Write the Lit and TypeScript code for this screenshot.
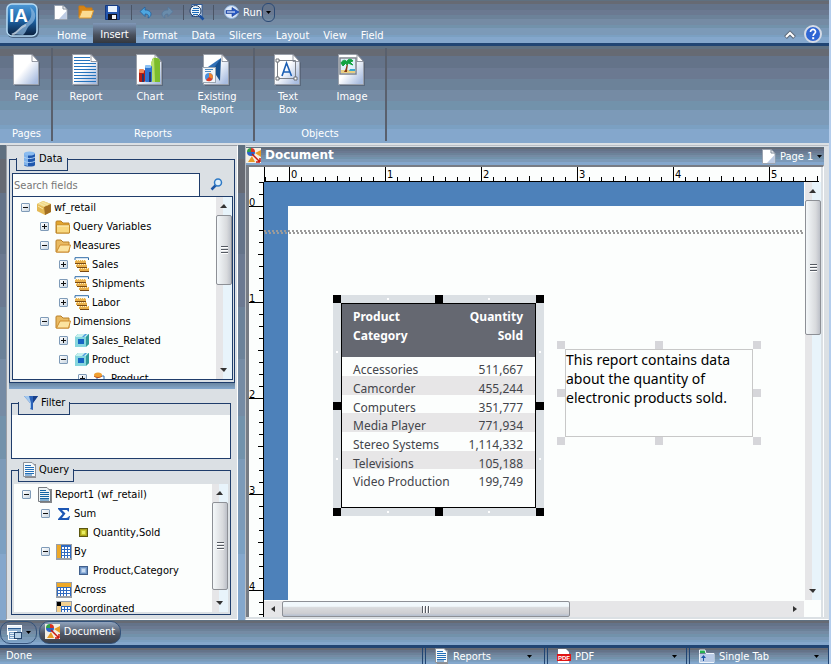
import { LitElement, html, css, svg, nothing, type TemplateResult } from "lit";
import { customElement, property } from "lit/decorators.js";
import { classMap } from "lit/directives/class-map.js";

type Art = TemplateResult;

/* ---------- icon artwork ---------- */

const icon = (w: number, h: number, body: unknown, vb = `0 0 ${w} ${h}`): Art =>
  html`<svg class="ico" width=${w} height=${h} viewBox=${vb} aria-hidden="true">${body}</svg>`;

const sheet = (extra: unknown = nothing): Art =>
  icon(28, 32, svg`
    <defs><linearGradient id="sh" x1="0" y1="0" x2="1" y2="1">
      <stop offset="0.45" stop-color="#fff"/><stop offset="0.9" stop-color="#a9bde0"/></linearGradient></defs>
    <path d="M2 2H20L27 9V32H2Z" fill="#4d586b" opacity=".6"/>
    <path d="M.5 .5H19L25.500 7.500V30.500H.5Z" fill="url(#sh)" stroke="#9aa0aa"/>
    <path d="M19 .5L25.500 7.500H19Z" fill="#fff" stroke="#6a707c" stroke-width=".7"/>
    ${extra}`);

const textLines = svg`<path d="M2 3.500H18M2 6.500H18M2 9.500H24M2 12.500H24M2 15.500H24M2 18.500H24M2 21.500H24M2 24.500H24M2 27.500H24" stroke="#2473bd"/>`;

const chartArt = svg`
  <path d="M16 6C16 3 24 3 24 7V28H16Z" fill="#7cbd2c"/><path d="M15 8L18 3L19 28H15Z" fill="#b7de6d"/>
  <rect x="9" y="12" width="7" height="16" rx="1" fill="#2f74cf"/><rect x="9" y="11" width="6" height="3" rx="1" fill="#8bc1f4"/>
  <rect x="3" y="16" width="6" height="12" rx="1" fill="#b51d12"/><rect x="3" y="15" width="5" height="4" rx="1" fill="#f08a58"/>
  <path d="M7 20V28M14 18V28" stroke="#26356a" stroke-width="2"/>`;

const existingArt = svg`
  <path d="M18 4L17 27L11 18L6 24L4 19Z" fill="#17508f"/><path d="M18 4L2 15L8 18Z" fill="#2f6fb6"/>
  <rect x="-.5" y="13.500" width="13" height="15" fill="#f2f5f8" stroke="#9aa7b4"/>
  <path d="M2 15.500H10M2 17.500H8" stroke="#4c8cc4"/>
  <circle cx="6" cy="23" r="4" fill="#4a90dd"/><path d="M6 23V19A4 4 0 0 1 9.500 25Z" fill="#f0812a"/><path d="M6 23L9.500 25A4 4 0 0 1 3 26Z" fill="#de3a22"/>`;

const textBoxArt = svg`
  <path d="M3.500 6.500H21.500V24.500H3.500Z" fill="none" stroke="#7d8188"/>
  <path d="M2 5h3v3h-3zM20 23h3v3h-3zM2 23h3v3h-3z" fill="#fff" stroke="#6c7077"/>
  <path d="M8 22L12.500 9L17.500 22M9.500 18H16" fill="none" stroke="#1b5fb4" stroke-width="1.600"/>`;

const imageArt = svg`
  <rect x="2" y="4" width="16" height="16" fill="#fff" stroke="#7e848d" stroke-width="1.500"/>
  <rect x="3" y="5" width="14" height="11" fill="#dff0fa"/><rect x="3" y="16" width="14" height="3" fill="#e8cf83"/>
  <path d="M12 15H17V17H11Z" fill="#3aa7cf"/>
  <path d="M9 9C8 13 8 15 6 18H9C9 15 10 12 10 9Z" fill="#8a3b12"/>
  <path d="M3 9C5 5 8 6 9 8C9 5 13 4 15 7L12 8L15 11L10 9L9 11L8 9L5 12Z" fill="#12a340" stroke="#12a340"/>`;

const newDoc = icon(14, 15, svg`<path d="M.5.5H9L13 4V14.500H.5Z" fill="#fff" stroke="#9aa3b0"/><path d="M12.500 6V14H5Z" fill="#bccbe4"/><path d="M9 .5V4H13" fill="none" stroke="#7d8796"/>`);
const openFolder = icon(16, 14, svg`<path d="M1 12V1H6L8 3H14V6" fill="#d68415" stroke="#c77a17"/><path d="M1 13L4 5.500H15.500L13 13Z" fill="#fbdc92" stroke="#e29a2d"/>`);
const save = icon(15, 15, svg`<path d="M.5.5H13L14.500 2V14.500H.5Z" fill="#2456ae" stroke="#163a80"/><rect x="3" y="1" width="9" height="6" fill="#e9f3fd"/><rect x="3" y="9" width="9" height="6" fill="#10131f"/><rect x="7" y="10" width="4" height="4" fill="#eef1f5"/>`);
const undo = icon(13, 13, svg`<path d="M1 5.500L6 1V4C10 4 12 6 12 8C12 10 11 11 9 12C10 9 9 8 6 8V10.500Z" fill="#4ea6df" stroke="#235f9c" stroke-width=".8"/>`);
const redo = icon(13, 13, svg`<path d="M12 5.500L7 1V4C3 4 1 6 1 8C1 10 2 11 4 12C3 9 4 8 7 8V10.500Z" fill="#6a8cab" stroke="#55779a" stroke-width=".8"/>`);
const preview = icon(16, 17, svg`<rect x="3" y=".5" width="10" height="12" fill="#fff" stroke="#2f5c9a"/><circle cx="6.500" cy="7" r="5.500" fill="#eaf4fc" stroke="#1d3861"/><path d="M4 4.500H10M3 6.500H10M3 8.500H10M4 10.500H9" stroke="#1c6ab6"/><path d="M10.500 11.500L14.500 15.500" stroke="#1a4fa0" stroke-width="2.500"/>`);
const runIcon = icon(16, 14, svg`<ellipse cx="7.500" cy="7" rx="7" ry="6.500" fill="#dbe8f8" stroke="#8eb0da"/><path d="M2 5.500H8V2.500L15 7L8 11.500V8.500H2Z" fill="#2859c4" stroke="#173a92" stroke-width=".6"/><path d="M3 7H11" stroke="#fff"/>`);
const caret = html`<svg class="caret" width="5" height="3" viewBox="0 0 5 3" aria-hidden="true"><path d="M0 0H5L2.500 3Z" fill="currentColor"/></svg>`;

const logo = icon(34, 36, svg`
  <defs><linearGradient id="lg" x1="0" y1="0" x2="0" y2="1"><stop offset="0" stop-color="#4e9ad8"/><stop offset=".5" stop-color="#1d64a6"/><stop offset="1" stop-color="#0b1f3c"/></linearGradient></defs>
  <rect x="1" y="2" width="32" height="33" rx="6" fill="#20344e" opacity=".6"/>
  <rect x="1" y="1" width="30" height="32" rx="5" fill="url(#lg)" stroke="#b7dcf6" stroke-width="1.500"/>
  <path d="M5 31C14 28 12 24 19 21C25 17 27 12 24 4C31 9 31 17 24 22C20 25 21 29 17 32Z" fill="#8fb9df" opacity=".7"/>
  <path d="M6 32C14 28 12 25 20 22" stroke="#d8dde2" stroke-width="2" fill="none" opacity=".6"/>
  <text x="3" y="19" class="logo-text">IA</text>`);

const help = icon(18, 18, svg`<circle cx="9" cy="9" r="8" fill="#2f66d4" stroke="#d5dbe6" stroke-width="2"/><path d="M6.500 7C6.500 3.500 11.700 3.700 11.500 7C11.400 8.700 9.200 8.600 9.200 11" fill="none" stroke="#fff" stroke-width="1.700"/><rect x="8.200" y="12.200" width="2" height="2" fill="#fff"/>`);
const collapse = icon(12, 9, svg`<path d="M1.500 7.500L6 3L10.500 7.500" fill="none" stroke="#5d6878" stroke-width="4"/><path d="M2 7L6 3L10 7" fill="none" stroke="#fff" stroke-width="2"/>`);

const database = icon(16, 16, svg`<path d="M3 2H14V14C14 16 3 16 3 14Z" fill="#1f57ad"/><path d="M3 2H7V15L3 14Z" fill="#7fb2ea"/><ellipse cx="8.500" cy="2.500" rx="5.500" ry="2" fill="#8bbcf0"/><path d="M3 6C5 8 12 8 14 6M3 10C5 12 12 12 14 10" stroke="#aed0f5" fill="none"/>`);
const funnel = icon(16, 16, svg`<path d="M1 1H15L10 8V15L7 14V8Z" fill="#2b62b8"/><path d="M1 1H6L8 8V14L7 13V8Z" fill="#a3c8ee"/><path d="M10 1H15L10 8Z" fill="#173f8a"/>`);
const lineDoc = icon(14, 16, svg`<path d="M2 2H13V16H2Z" fill="#8c8c90"/><path d="M.5.5H9L12.500 4V14.500H.5Z" fill="#f6fafc" stroke="#8c9198"/><path d="M2 3.500H8M2 5.500H11M2 7.500H11M2 9.500H11M2 11.500H11M2 13H9" stroke="#236fb8"/>`);
const magnifier = icon(13, 13, svg`<path d="M6 7L1.500 11.500" stroke="#1d57a5" stroke-width="2.500"/><circle cx="8" cy="4.500" r="3.500" fill="#dff0fb" stroke="#2f7ac6" stroke-width="1.500"/>`);

const treeArt: Record<string, Art> = {
  cube: icon(16, 16, svg`<path d="M1 4L7 1L15 4V12L9 15L1 11Z" fill="#e4b955"/><path d="M1 4L7 1L15 4L8 7Z" fill="#efd88a"/><path d="M8 7L15 4V12L9 15Z" fill="#a36f22"/><path d="M3 3L9 6M6 2L12 5M2 6L7 9" stroke="#fae9a7"/>`),
  closed: icon(16, 14, svg`<path d="M1 13V2Q1 1 2 1H6L8 3H14V13Z" fill="#e3a62f" stroke="#b98028"/><path d="M1.500 5H14.500V13H1.500Z" fill="#f8d87f" stroke="#c38b2b"/><path d="M2 6H14" stroke="#fff0bd"/>`),
  open: icon(16, 14, svg`<path d="M1 13V2Q1 1 2 1H6L8 3H14V13Z" fill="#e9ba62" stroke="#b98028"/><path d="M1.500 13L5 6H15.500L13.500 13Z" fill="#fbe3a0" stroke="#cf8c2e"/>`),
  measure: icon(16, 15, svg`<path d="M1 3V.7H14.500V3" fill="none" stroke="#2e6ca8"/><path d="M1 3H12V6H1ZM2 7H13V10H2ZM5 11H15V14H5Z" fill="#e8b04c"/><path d="M1 6.500H12M3 10.500H13M6 14.500H15" stroke="#7a4a12"/><path d="M1 3.500H12M2 7.500H13M5 11.500H15" stroke="#fff0c0" stroke-dasharray="1 1"/>`),
  dimension: icon(16, 15, svg`<path d="M1 4L4 1H15V11L11 14H1Z" fill="#3fa9ad"/><path d="M1 4L4 1H15L12 4Z" fill="#c5f0ee"/><rect x="1" y="4" width="11" height="10" fill="#85d6dd"/><rect x="4" y="6" width="6" height="5" fill="#1765c4"/><path d="M12 4L15 1V11L12 14Z" fill="#319b9c"/><path d="M8 4L11 1H13L10 4Z" fill="#4f9be0"/>`),
  hierarchy: icon(16, 14, svg`<path d="M5 4H11V9M4 5V11" stroke="#2b6fb2" fill="none"/><g fill="#f0a030"><ellipse cx="5" cy="3" rx="4" ry="2.500"/><ellipse cx="5" cy="10" rx="3" ry="2.500"/><ellipse cx="12" cy="10" rx="3" ry="2.500"/></g><path d="M1 4C3 6 7 6 9 4" stroke="#c0501a" fill="none"/>`),
  report: icon(16, 16, svg`<path d="M3 2H15V16H3Z" fill="#85878a"/><path d="M1.500.5H10L13.500 4V14.500H1.500Z" fill="#eef4f6" stroke="#777b80"/><path d="M3 3.500H9M3 5.500H12M3 7.500H12M3 9.500H12M3 11.500H12M3 13H12" stroke="#1464a4"/>`),
  sigma: icon(14, 14, svg`<path d="M1 1H12V4.500H11C10.500 3 10 3 5 3L8.500 6.500L5 11C10 11 11 11 12 9H13L12 13H1V12L5.500 7L1 2Z" fill="#1c57b4"/>`),
  by: icon(16, 16, svg`<rect width="16" height="16" fill="#9aa0a8"/><rect x="1" y="1" width="14" height="13" fill="#2f6ac0"/><rect x="1" y="1" width="4" height="13" fill="#eda827"/><path d="M2 3.500H5M2 7.500H5M2 11.500H5M6 3H8V5H6ZM9 3H11V5H9ZM12 3H14V5H12ZM6 6H8V8H6ZM9 6H11V8H9ZM12 6H14V8H12ZM6 9H8V11H6ZM9 9H11V11H9ZM12 9H14V11H12ZM6 12H8V14H6ZM9 12H11V14H9ZM12 12H14V14H12Z" fill="#fff"/>`),
  across: icon(16, 16, svg`<rect width="16" height="16" fill="#9aa0a8"/><rect x="1" y="1" width="14" height="13" fill="#2f6ac0"/><rect x="1" y="1" width="14" height="4" fill="#eda827"/><path d="M2 6H4V8H2ZM5 6H7V8H5ZM8 6H10V8H8ZM11 6H14V8H11ZM2 9H4V11H2ZM5 9H7V11H5ZM8 9H10V11H8ZM11 9H14V11H11ZM2 12H4V14H2ZM5 12H7V14H5ZM8 12H10V14H8ZM11 12H14V14H11Z" fill="#fff"/>`),
  coordinated: icon(16, 16, svg`<rect width="16" height="16" fill="#9aa0a8"/><rect x="1" y="1" width="14" height="13" fill="#2f6ac0"/><path d="M5 1H15V5H5ZM1 5H5V14H1Z" fill="#f6d28f"/><path d="M6 6H8V8H6ZM9 6H11V8H9ZM12 6H14V8H12ZM6 9H8V11H6ZM9 9H11V11H9ZM12 9H14V11H12ZM6 12H8V14H6ZM9 12H11V14H9ZM12 12H14V14H12Z" fill="#fff"/><rect x="1" y="1" width="4" height="4" fill="#000"/>`),
  yellow: icon(9, 9, svg`<rect x=".5" y=".5" width="8" height="8" fill="#a9a11c" stroke="#5b5710"/><path d="M2.500 6.500V2.500H6.500V6.500Z" fill="#e9ec64" stroke="#c9c930"/>`),
  blue: icon(9, 9, svg`<rect x=".5" y=".5" width="8" height="8" fill="#6d93c4" stroke="#41608c"/><path d="M2.500 6.500V2.500H6.500V6.500Z" fill="#c9dcf2" stroke="#9dbbe0"/>`),
};

const docIcon = icon(16, 16, svg`<rect width="15" height="15" fill="#f3efe4"/><path d="M1 4A4 4 0 0 1 5 0L5 4Z" fill="#2fa04a"/><path d="M5 0A4 4 0 0 1 9 4H5Z" fill="#d9321f"/><path d="M1 4H9A4 4 0 0 1 1 4Z" fill="#2a62c9"/><path d="M15 2V9L9 5ZM2 14L6 8L9 14Z" fill="#e89a25"/><path d="M6 6L14 14M14 14V10M14 14H10" stroke="#c8190f" stroke-width="1.500" fill="none"/>`);
const windows = icon(16, 16, svg`<rect x=".5" y=".5" width="14" height="9" fill="#8fb0d0" stroke="#fff"/><path d="M1 2H14" stroke="#e8f0f8" stroke-width="2"/><path d="M1 3.500H14" stroke="#2c5c92"/><rect x="1.500" y="6.500" width="8" height="8" fill="#7ba2c8" stroke="#fff"/><path d="M3 8.500H8M3 10.500H8M3 12.500H8" stroke="#e8f0f8"/><rect x="7.500" y="7.500" width="7" height="6" fill="#b7d0e6" stroke="#24456c"/>`);
const pdfIcon = icon(14, 14, svg`<path d="M1 0H9L12 3V14H1Z" fill="#fff"/><rect y="5" width="14" height="7" fill="#e01414"/><text x="1" y="11" class="pdf-text">PDF</text>`);
const tabIcon = icon(16, 14, svg`<path d="M1 1H6V4H1Z" fill="#22b04c"/><path d="M.5 4.500V1H6L7 4.500H15V13.500H.5Z" fill="none" stroke="#eef4fb"/><rect x="1" y="5" width="14" height="8" fill="#b9cbe6"/><path d="M4 12V9H2L4.500 6L7 9H5V12Z" fill="#1e57a8"/>`);

/* ---------- shared styles ---------- */

const base = css`
  * { box-sizing: border-box; }
  button, input, select { font: inherit; color: inherit; margin: 0; padding: 0; border: 0; background: none; border-radius: 0; }
  .ico, .caret { display: block; flex: none; overflow: visible; }
`;

const bands = css`linear-gradient(
  #5f7080 0 3%, #666a73 3% 10%, #647389 10% 23%, #6b7991 23% 34%, #6c8299 34% 45%,
  #758ba4 45% 57%, #7292ab 57% 66%, #7c9ab8 66% 81%, #7ba0c2 81% 86%, #84a7cc 86% 100%)`;

/* ---------- scroll bar ---------- */

@customElement("scroll-bar")
export class ScrollBar extends LitElement {
  @property({ type: Boolean, reflect: true }) horizontal = false;
  @property({ type: Number }) before = 0;
  @property({ type: Number }) size = 50;

  static styles = css`
    :host { display: flex; flex-direction: column; width: 16px; flex: none; background: linear-gradient(90deg, #e6e6e8 7px, #e8f4fb 7px); }
    :host([horizontal]) { flex-direction: row; width: auto; height: 16px; background: #e6e6e8; }
    .end { flex: 0 0 18px; display: grid; place-items: center; color: #333; }
    .lane { flex: 1; display: flex; flex-direction: inherit; min-height: 0; min-width: 0; }
    .thumb { border: 1px solid #8d9096; border-radius: 2px; background: linear-gradient(90deg, #f4f8fa, #d8dadd 70%, #bcc0c8); display: grid; place-content: center; }
    :host([horizontal]) .thumb { background: linear-gradient(#f1f8fc 30%, #d8dadd 40%, #cfcfd2 80%, #b4bfd0); }
    .grip { width: 7px; height: 8px; background: repeating-linear-gradient(#555a62 0 1px, #fff 1px 2px, transparent 2px 3px); }
    :host([horizontal]) .grip { width: 8px; height: 7px; background: repeating-linear-gradient(90deg, #555a62 0 1px, #fff 1px 2px, transparent 2px 3px); }
  `;

  private arrow(first: boolean) {
    const d = this.horizontal ? (first ? "M6 1V7L2 4Z" : "M2 1V7L6 4Z") : (first ? "M0 6H7L4 2Z" : "M0 2H7L4 6Z");
    return html`<div class="end"><svg width="8" height="8" viewBox="0 0 8 8"><path d=${d} fill="currentColor" /></svg></div>`;
  }

  render() {
    return html`${this.arrow(true)}
      <div class="lane">
        <div style="flex: ${this.before} 1 0"></div>
        <div class="thumb" style="flex: ${this.size} 1 0"><div class="grip"></div></div>
        <div style="flex: ${100 - this.before - this.size} 1 0"></div>
      </div>
      ${this.arrow(false)}`;
  }
}

/* ---------- tree ---------- */

interface Node { level: number; text: string; art: string; mark?: "+" | "-"; }

@customElement("field-tree")
export class FieldTree extends LitElement {
  @property({ attribute: false }) nodes: Node[] = [];

  static styles = [base, css`
    :host { display: block; flex: 1; min-width: 0; overflow: hidden; }
    ul { list-style: none; margin: 0; padding: 1px 0 0 8px; }
    li { display: flex; align-items: center; height: 19px; white-space: nowrap; }
    .l1 { padding-left: 19px; }
    .l2 { padding-left: 38px; }
    .l3 { padding-left: 57px; }
    .mark { width: 9px; height: 9px; margin-right: 6px; flex: none; }
    .box { border: 1px solid #7f9bb8; border-radius: 1px; background: linear-gradient(135deg, #fff, #c9d6e2); }
    .box svg { display: block; }
    .art { width: 16px; margin-right: 2px; display: grid; place-items: center; flex: none; }
  `];

  render() {
    return html`<ul role="tree">
      ${this.nodes.map((n) => html`<li role="treeitem" class="l${n.level}">
        ${n.mark
          ? html`<button class="mark box" aria-label="Toggle ${n.text}"><svg width="7" height="7" viewBox="0 0 7 7">
              <path d=${n.mark === "+" ? "M1 3.500H6M3.500 1V6" : "M1 3.500H6"} stroke="#111" /></svg></button>`
          : html`<span class="mark"></span>`}
        <span class="art">${treeArt[n.art]}</span>${n.text}
      </li>`)}
    </ul>`;
  }
}

/* ---------- application ---------- */

const menu = ["Home", "Insert", "Format", "Data", "Slicers", "Layout", "View", "Field"];

const ribbon = [
  { name: "Pages", cls: "pages", items: [{ text: "Page", art: sheet() }] },
  { name: "Reports", cls: "reports", items: [
    { text: "Report", art: sheet(textLines) },
    { text: "Chart", art: sheet(chartArt) },
    { text: "Existing Report", art: sheet(existingArt) },
  ] },
  { name: "Objects", cls: "objects", items: [
    { text: "Text Box", art: sheet(textBoxArt) },
    { text: "Image", art: sheet(imageArt) },
  ] },
];

const dataNodes: Node[] = [
  { level: 0, text: "wf_retail", art: "cube", mark: "-" },
  { level: 1, text: "Query Variables", art: "closed", mark: "+" },
  { level: 1, text: "Measures", art: "open", mark: "-" },
  { level: 2, text: "Sales", art: "measure", mark: "+" },
  { level: 2, text: "Shipments", art: "measure", mark: "+" },
  { level: 2, text: "Labor", art: "measure", mark: "+" },
  { level: 1, text: "Dimensions", art: "open", mark: "-" },
  { level: 2, text: "Sales_Related", art: "dimension", mark: "+" },
  { level: 2, text: "Product", art: "dimension", mark: "-" },
  { level: 3, text: "Product", art: "hierarchy", mark: "+" },
];

const queryNodes: Node[] = [
  { level: 0, text: "Report1 (wf_retail)", art: "report", mark: "-" },
  { level: 1, text: "Sum", art: "sigma", mark: "-" },
  { level: 2, text: "Quantity,Sold", art: "yellow" },
  { level: 1, text: "By", art: "by", mark: "-" },
  { level: 2, text: "Product,Category", art: "blue" },
  { level: 1, text: "Across", art: "across" },
  { level: 1, text: "Coordinated", art: "coordinated" },
];

const sales = [
  ["Accessories", "511,667"],
  ["Camcorder", "455,244"],
  ["Computers", "351,777"],
  ["Media Player", "771,934"],
  ["Stereo Systems", "1,114,332"],
  ["Televisions", "105,188"],
  ["Video Production", "199,749"],
];

@customElement("app-root")
export class AppRoot extends LitElement {
  static styles = [base, css`
    :host {
      display: flex; flex-direction: column; height: 100vh; padding-right: 2px; overflow: hidden;
      background: #b4cdec; color: #000;
      font: 11px/13px "DejaVu Sans Condensed", "DejaVu Sans", "Liberation Sans", sans-serif;
      --navy: #1f3d6b; --panel: #dbe0e4; --paper: #fcfefd;
    }
    .logo-text { font: bold 19px "Liberation Sans", sans-serif; fill: #fff; }
    .pdf-text { font: bold 6px "Liberation Sans", sans-serif; fill: #fff; }

    /* title area */
    .top { display: flex; height: 46px; color: #fff; background: ${bands}; border-bottom: 3px solid #214573; }
    .logo { width: 50px; padding: 3px 0 0 6px; }
    .bars { flex: 1; display: flex; flex-direction: column; }
    .quick { display: flex; align-items: center; height: 24px; }
    .quick button { display: flex; align-items: center; justify-content: center; gap: 3px; width: 27px; height: 24px; }
    .quick .tight { width: 22px; }
    .quick .run { width: 38px; margin-left: 8px; }
    .quick .drop { width: 13px; height: 19px; border: 1px solid #2b4a75; border-radius: 6px; color: #000; }
    .sep { width: 1px; height: 15px; margin: 0 2px 0 5px; background: #4b5566; }
    .menu { display: flex; height: 19px; align-items: stretch; }
    .menu button { padding: 3px 7px 0; }
    .menu .on { background: linear-gradient(#7f97b8, #4a515e 60%, #33383f); margin: -1px 0 0; padding: 2px 7px 0; }
    .corner { display: flex; align-items: flex-end; gap: 8px; padding: 0 7px 0 0; }
    .corner button { display: grid; place-items: center; height: 18px; }

    /* ribbon */
    .ribbon { display: flex; height: 99px; padding: 2px 0; color: #fff; background: ${bands}; background-size: 100% 97px; background-repeat: no-repeat; background-color: var(--panel); }
    .group { display: flex; flex-direction: column; align-items: center; border-right: 2px solid #59606d; height: 93px; }
    .group h2 { margin: auto 0 1px; font: inherit; line-height: 13px; }
    .tools { display: flex; padding-top: 6px; }
    .tools button { width: 64px; display: flex; flex-direction: column; align-items: center; gap: 4px; align-self: flex-start; }
    .tools span { width: 56px; }
    .pages { width: 53px; padding-left: 2px; }
    .pages .tools button, .pages .tools span { width: 51px; }
    .reports { width: 202px; }
    .reports button:last-child { width: 70px; }
    .objects { width: 132px; }
    .objects .tools span { width: 40px; }

    /* body */
    .main { flex: 1; display: flex; min-height: 0; padding-left: 6px; gap: 7px; background: ${bands}; }
    .side { width: 232px; flex: none; display: flex; flex-direction: column; padding: 13px 3px 4px 2px; background: var(--panel); border: 1px solid #9a9fa6; border-right-color: #fff; border-bottom-color: #fff; }
    .box { border: 1px solid var(--navy); display: flex; flex-direction: column; min-height: 0; }
    .box > h3 { align-self: flex-start; display: flex; align-items: center; gap: 2px; height: 22px; margin: -11px 0 0 6px; padding: 0 5px 2px; font: inherit; flex: none; border-bottom: 1px solid var(--navy);
      background: linear-gradient(90deg, var(--navy) 1px, transparent 1px calc(100% - 1px), var(--navy) calc(100% - 1px)) 0 100% / 100% 12px no-repeat, var(--panel); }
    .data { flex: 1; margin-right: -1px; }
    .find { display: flex; margin: 2px 1px 0 2px; flex: none; }
    .find input { width: 188px; height: 23px; padding: 0 1px; background: var(--paper); border: 1px solid var(--navy); border-bottom: 0; }
    .find input::placeholder { color: #777; opacity: 1; }
    .find button { flex: 1; display: grid; place-items: center; }
    .tree { display: flex; flex: 1; min-height: 0; margin: 0 1px 2px 2px; background: var(--paper); border: 1px solid var(--navy); }
    .strip { height: 6px; margin-right: -1px; flex: none; background: linear-gradient(#6b86a0, #84a7cc); }
    .filter { height: 56px; margin: 14px 3px 0 2px; flex: none; }
    .filter .blank { flex: 1; background: var(--paper); }
    .query { height: 145px; margin: 11px 3px 0 2px; flex: none; }
    .query .tree { border: 0; margin: 2px; }

    .doc { flex: 1; min-width: 0; display: flex; flex-direction: column; padding: 0 4px 2px 0; background: var(--panel); border: 1px solid #b9bec4; border-bottom-color: #fff; border-right-color: var(--panel); }
    .bar { display: flex; align-items: center; gap: 3px; height: 18px; flex: none; margin-top: 1px; color: #fff; background: ${bands}; }
    .bar h1 { flex: 1; margin: 0; font: bold 12px/14px "DejaVu Sans", sans-serif; padding-bottom: 2px; }
    .pick { display: flex; align-items: center; gap: 4px; }
    .pick select { appearance: none; width: 100%; min-width: 0; }
    .pick .caret { color: #000; }
    .bar .pick { width: 60px; margin-right: 2px; }
    .bar .pick select { width: 34px; }
    .work { flex: 1; min-height: 0; display: grid; grid-template: 15px minmax(0, 1fr) 17px / 15px minmax(0, 1fr) 17px; padding-right: 2px; background: linear-gradient(var(--panel), var(--panel)) 100% 0 / 2px 100% no-repeat, var(--paper); border: solid #777c84; border-width: 2px 0 0 3px; border-right: 1px solid #fff; }
    .hr { grid-column: 2 / 4; display: flex; overflow: hidden; margin-right: 2px; padding-left: 24px; border-bottom: 1px solid #000; border-left: 1px solid #000;
      background: linear-gradient(90deg, #000 1px, transparent 1px) 72px 100% / 96px 5px repeat-x, linear-gradient(90deg, #000 1px, transparent 1px) 0 100% / 12px 4px repeat-x; }
    .hr span { flex: 0 0 96px; height: 14px; padding: 1px 0 0 1px; border-left: 1px solid #000; }
    .vr { grid-row: 2 / 4; overflow: hidden; padding-top: 24px; border-right: 1px solid #000;
      background: linear-gradient(#000 1px, transparent 1px) 100% 0 / 4px 12px repeat-y, linear-gradient(#000 1px, transparent 1px) 100% 72px / 5px 96px repeat-y; }
    .vr span { display: block; height: 96px; margin: -10px 0 10px; }
    .vr span::after { content: ""; display: block; border-top: 1px solid #000; margin-top: -3px; }
    .canvas { position: relative; overflow: hidden; padding: 24px 0 0 24px; background: #4d81ba; }
    .page { height: 100%; background: var(--paper); }
    .guide { position: absolute; left: 0; right: 0; top: 48px; height: 4px;
      background: linear-gradient(90deg, #9b9b9b 2px, transparent 2px) 0 0 / 4px 2px repeat-x, linear-gradient(90deg, #9b9b9b 2px, transparent 2px) 1px 2px / 4px 2px repeat-x; }
    .work > scroll-bar { margin: 0 0 0 1px; }
    .work > scroll-bar[horizontal] { margin: 1px 0 0; }

    /* selectable objects */
    .object { position: absolute; padding: 8px; font-family: "Noto Sans", "DejaVu Sans", sans-serif; }
    .handles { position: absolute; inset: 0; display: grid; grid-template-columns: repeat(3, 8px); justify-content: space-between; align-content: space-between; pointer-events: none; }
    .handles i { height: 8px; background: #d6d6da; }
    .active .handles i { background: #000; }
    .handles i:nth-child(5) { visibility: hidden; }
    .report { left: 69px; top: 113px; width: 211px; height: 221px; --dot: linear-gradient(#fff, #fff);
      background: var(--dot) 54px 3px, var(--dot) 155px 3px, var(--dot) 54px 216px, var(--dot) 155px 216px,
        var(--dot) 3px 56px, var(--dot) 3px 163px, var(--dot) 206px 56px, var(--dot) 206px 163px;
      background-size: 2px 2px; background-repeat: no-repeat; background-color: var(--panel); }
    .frame { height: 100%; border: 1px solid #000; background: var(--paper); }
    .report table { width: 100%; border-collapse: separate; border-spacing: 0; font-size: 12px; line-height: 19px; color: #43454b; }
    .report thead { background: #656871; color: #fff; }
    .report th { height: 53px; padding: 3px 0 0 11px; vertical-align: top; text-align: left; }
    .report td { height: 19px; padding: 0 0 0 11px; white-space: nowrap; }
    .report td div { height: 16px; margin-top: 3px; line-height: 19px; }
    .report tr:nth-child(3n) td { height: 18px; }
    .report tr:nth-child(3n) td div { height: 15px; }
    .report tbody tr:nth-child(even) { background: #e7e6e7; }
    .report th:last-child, .report td:last-child { padding-left: 0; padding-right: 12px; text-align: right; }
    .note { left: 293px; top: 159px; width: 204px; height: 104px; }
    .note p { height: 100%; margin: 0; border: 1px solid #c8c8c8; font-size: 14px; line-height: 19px; }

    /* bottom bars */
    .tabs { display: flex; gap: 2px; height: 28px; flex: none; padding-top: 1px; background: ${bands}; border-bottom: 3px solid #214573; color: #fff; }
    .tabs button { height: 23px; display: flex; align-items: center; justify-content: center; gap: 3px; border: 1px solid #34527a; border-radius: 10px; }
    .tabs .all { width: 37px; }
    .tabs .all .caret { color: #000; }
    .tabs .cur { width: 82px; padding-bottom: 2px; background: linear-gradient(#8fa3bd, #4f5664 55%, #3b4049); }
    .status { display: flex; gap: 2px; height: 16px; flex: none; color: #fff; background: ${bands}; }
    .status p { flex: 1; margin: 0; padding: 1px 6px; border-right: 1px solid #214573; }
    .status .pick { width: 120px; padding: 0 12px 0 9px; border: solid #214573; border-width: 0 1px; }
    .status .wide { width: 140px; padding: 0 9px; }
  `];

  private handles() {
    return html`<div class="handles">${Array.from({ length: 9 }, () => html`<i></i>`)}</div>`;
  }

  private picker(label: string, value: string, art: Art, cls = "") {
    return html`<label class="pick ${cls}">${art}
      <select aria-label=${label}><option>${value}</option></select>${caret}</label>`;
  }

  render() {
    return html`
      <header class="top">
        <div class="logo">${logo}</div>
        <div class="bars">
          <div class="quick">
            <button class="tight" aria-label="New">${newDoc}</button>
            <button aria-label="Open">${openFolder}</button>
            <button aria-label="Save">${save}</button>
            <span class="sep"></span>
            <button class="tight" aria-label="Undo">${undo}</button>
            <button class="tight" aria-label="Redo">${redo}</button>
            <span class="sep"></span>
            <button class="tight" aria-label="Preview">${preview}</button>
            <span class="sep"></span>
            <button class="run">${runIcon}Run</button>
            <button class="drop" aria-label="Run options">${caret}</button>
          </div>
          <nav class="menu">
            ${menu.map((m) => html`<button class=${classMap({ on: m === "Insert" })}>${m}</button>`)}
          </nav>
        </div>
        <div class="corner">
          <button aria-label="Collapse ribbon">${collapse}</button>
          <button aria-label="Help">${help}</button>
        </div>
      </header>

      <section class="ribbon">
        ${ribbon.map((g) => html`<div class="group ${g.cls}">
          <div class="tools">
            ${g.items.map((i) => html`<button>${i.art}<span>${i.text}</span></button>`)}
          </div>
          <h2>${g.name}</h2>
        </div>`)}
      </section>

      <main class="main">
        <aside class="side">
          <section class="box data">
            <h3>${database}Data</h3>
            <div class="find">
              <input type="text" placeholder="Search fields" aria-label="Search fields" />
              <button aria-label="Search">${magnifier}</button>
            </div>
            <div class="tree">
              <field-tree .nodes=${dataNodes}></field-tree>
              <scroll-bar .before=${0} .size=${47}></scroll-bar>
            </div>
          </section>
          <div class="strip"></div>
          <section class="box filter">
            <h3>${funnel}Filter</h3>
            <div class="blank"></div>
          </section>
          <section class="box query">
            <h3>${lineDoc}Query</h3>
            <div class="tree">
              <field-tree .nodes=${queryNodes}></field-tree>
              <scroll-bar .before=${0} .size=${96}></scroll-bar>
            </div>
          </section>
        </aside>

        <section class="doc">
          <div class="bar">
            ${docIcon}
            <h1>Document</h1>
            ${this.picker("Page", "Page 1", newDoc)}
          </div>
          <div class="work">
            <span></span>
            <div class="hr">${[0, 1, 2, 3, 4, 5].map((n) => html`<span>${n}</span>`)}</div>
            <div class="vr">${[0, 1, 2, 3, 4].map((n) => html`<span>${n}</span>`)}</div>
            <div class="canvas">
              <div class="page"></div>
              <div class="guide"></div>
              <div class="object report active">
                <div class="frame">
                  <table>
                    <thead><tr><th>Product<br />Category</th><th>Quantity<br />Sold</th></tr></thead>
                    <tbody>
                      ${sales.map(([name, qty]) => html`<tr><td><div>${name}</div></td><td><div>${qty}</div></td></tr>`)}
                    </tbody>
                  </table>
                </div>
                ${this.handles()}
              </div>
              <div class="object note">
                <p>This report contains data about the quantity of electronic products sold.</p>
                ${this.handles()}
              </div>
            </div>
            <scroll-bar .before=${0} .size=${35}></scroll-bar>
            <scroll-bar horizontal .before=${0} .size=${57}></scroll-bar>
          </div>
        </section>
      </main>

      <nav class="tabs">
        <button class="all" aria-label="Windows">${windows}${caret}</button>
        <button class="cur">${docIcon}Document</button>
      </nav>
      <footer class="status">
        <p>Done</p>
        ${this.picker("View", "Reports", lineDoc)}
        ${this.picker("Output format", "PDF", pdfIcon, "wide")}
        ${this.picker("Output target", "Single Tab", tabIcon, "wide")}
      </footer>
    `;
  }
}
